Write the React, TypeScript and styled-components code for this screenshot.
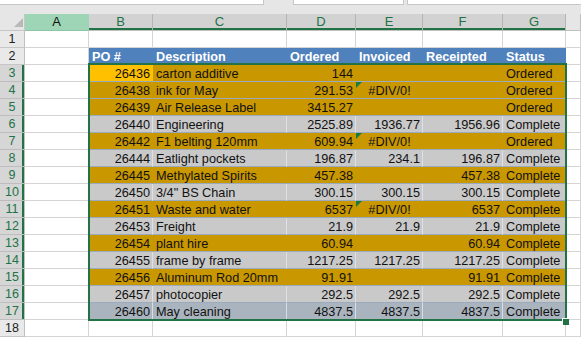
import React from "react";
import styled, { createGlobalStyle, css } from "styled-components";

const GlobalStyle = createGlobalStyle`
  html, body { margin: 0; padding: 0; background: #fff; overflow: hidden; }
`;

const GREEN = "#217346";
const ORANGE = "#c99700";
const GOLD = "#ffc000";
const GREY = "#c9c9c9";
const SLATE = "#aab4be";
const BLUE = "#4f81bd";
const ROWLINE = "#9aabbf";
const GRID = "#d4d4d4";

const Page = styled.div`
  position: relative;
  width: 581px;
  height: 338px;
  overflow: hidden;
  background: #fff;
  font-family: "Liberation Sans", Arial, sans-serif;
`;

const TopBar = styled.div`
  display: flex;
  align-items: flex-start;
  height: 14px;
  background: #e6e6e6;
`;

const BarField = styled.div<{ $w: number; $ml?: number; $bl?: boolean; $br?: boolean }>`
  box-sizing: border-box;
  flex: 0 0 ${(p) => p.$w}px;
  margin-left: ${(p) => p.$ml ?? 0}px;
  height: 5px;
  background: #fff;
  border-bottom: 1px solid #c6c6c6;
  border-left: ${(p) => (p.$bl ? "1px solid #c6c6c6" : "none")};
  border-right: ${(p) => (p.$br ? "1px solid #c6c6c6" : "none")};
`;

const Sheet = styled.div`
  display: grid;
  grid-template-columns: 25px 64px 64px 134px 69px 67px 80px 63px 1fr;
  grid-auto-rows: 17px;
`;

const Corner = styled.div`
  position: relative;
  box-sizing: border-box;
  background: #e6e6e6;
  border-right: 1px solid #c6c6c6;
  border-bottom: 1px solid #c6c6c6;
  &::after {
    content: "";
    position: absolute;
    right: 1px;
    bottom: 3px;
    width: 0;
    height: 0;
    border-left: 9px solid transparent;
    border-bottom: 9px solid #b9b9b9;
  }
`;

type HeadState = "normal" | "active" | "selected";

const ColHead = styled.div<{ $state: HeadState }>`
  box-sizing: border-box;
  display: flex;
  align-items: center;
  justify-content: center;
  font-size: 13px;
  line-height: 16px;
  border-right: 1px solid #c0c0c0;
  border-bottom: 1px solid #c0c0c0;
  background: #e6e6e6;
  color: #222;
  ${(p) =>
    p.$state === "active" &&
    css`
      background: #9fd5b7;
      color: #111;
      border-right-color: #9fd5b7;
      border-bottom-color: #8cc4a5;
    `}
  ${(p) =>
    p.$state === "selected" &&
    css`
      background: #d2d2d2;
      color: ${GREEN};
      border-right-color: #b5b5b5;
      box-shadow: inset 0 -2px 0 ${GREEN};
    `}
`;

const RowHead = styled.div<{ $selected?: boolean }>`
  box-sizing: border-box;
  text-align: center;
  font-size: 12.5px;
  line-height: 16px;
  background: #e9e9e9;
  color: #222;
  border-right: 1px solid #c0c0c0;
  border-bottom: 1px solid #c6c6c6;
  ${(p) =>
    p.$selected &&
    css`
      background: #d6d6d6;
      color: ${GREEN};
      border-bottom-color: #bdbdbd;
      box-shadow: inset -2px 0 0 ${GREEN};
    `}
`;

type Fill = "none" | "blue" | "orange" | "gold" | "grey" | "slate";

const fillStyles: Record<Fill, ReturnType<typeof css>> = {
  none: css`
    background: #fff;
    border-right-color: ${GRID};
    border-bottom-color: ${GRID};
  `,
  blue: css`
    background: ${BLUE};
    color: #fff;
    font-weight: bold;
    border-right-color: ${BLUE};
    border-bottom-color: ${BLUE};
  `,
  orange: css`
    background: ${ORANGE};
    border-right-color: ${ORANGE};
    border-bottom-color: ${ROWLINE};
  `,
  gold: css`
    background: ${GOLD};
    border-right-color: ${GOLD};
    border-bottom-color: ${ROWLINE};
  `,
  grey: css`
    background: ${GREY};
    border-right-color: #dde0e6;
    border-bottom-color: ${ROWLINE};
  `,
  slate: css`
    background: ${SLATE};
    border-right-color: #d9dde3;
    border-bottom-color: ${ROWLINE};
  `,
};

const Cell = styled.div<{ $fill: Fill; $align: "left" | "right" | "center"; $flag?: boolean }>`
  position: relative;
  box-sizing: border-box;
  overflow: hidden;
  white-space: nowrap;
  font-size: 12.7px;
  line-height: 15px;
  padding: 2px 2px 0 3px;
  color: #111;
  text-align: ${(p) => p.$align};
  border-right: 1px solid;
  border-bottom: 1px solid;
  ${(p) => fillStyles[p.$fill]}
  ${(p) =>
    p.$flag &&
    css`
      &::before {
        content: "";
        position: absolute;
        left: 0;
        top: 0;
        width: 0;
        height: 0;
        border-top: 6px solid #1d7a3e;
        border-right: 6px solid transparent;
      }
    `}
`;

const Selection = styled.div`
  position: absolute;
  left: 88px;
  top: 63px;
  width: 479px;
  height: 258px;
  box-sizing: border-box;
  border: 2px solid ${GREEN};
  pointer-events: none;
`;

const FillHandle = styled.div`
  position: absolute;
  left: 562px;
  top: 318px;
  width: 7px;
  height: 7px;
  box-sizing: border-box;
  background: ${GREEN};
  border-left: 1px solid #fff;
  border-top: 1px solid #fff;
`;

type Row = {
  po: string;
  desc: string;
  ordered: string;
  invoiced: string;
  receipted: string;
  status: string;
  fill: Fill;
  flag?: boolean;
};

const rows: Row[] = [
  { po: "26436", desc: "carton additive", ordered: "144", invoiced: "", receipted: "", status: "Ordered", fill: "orange" },
  { po: "26438", desc: "ink for May", ordered: "291.53", invoiced: "#DIV/0!", receipted: "", status: "Ordered", fill: "orange", flag: true },
  { po: "26439", desc: "Air Release Label", ordered: "3415.27", invoiced: "", receipted: "", status: "Ordered", fill: "orange" },
  { po: "26440", desc: "Engineering", ordered: "2525.89", invoiced: "1936.77", receipted: "1956.96", status: "Complete", fill: "grey" },
  { po: "26442", desc: "F1 belting 120mm", ordered: "609.94", invoiced: "#DIV/0!", receipted: "", status: "Ordered", fill: "orange", flag: true },
  { po: "26444", desc: "Eatlight pockets", ordered: "196.87", invoiced: "234.1", receipted: "196.87", status: "Complete", fill: "grey" },
  { po: "26445", desc: "Methylated Spirits", ordered: "457.38", invoiced: "", receipted: "457.38", status: "Complete", fill: "orange" },
  { po: "26450", desc: "3/4\" BS Chain", ordered: "300.15", invoiced: "300.15", receipted: "300.15", status: "Complete", fill: "grey" },
  { po: "26451", desc: "Waste and water", ordered: "6537", invoiced: "#DIV/0!", receipted: "6537", status: "Complete", fill: "orange", flag: true },
  { po: "26453", desc: "Freight", ordered: "21.9", invoiced: "21.9", receipted: "21.9", status: "Complete", fill: "grey" },
  { po: "26454", desc: "plant hire", ordered: "60.94", invoiced: "", receipted: "60.94", status: "Complete", fill: "orange" },
  { po: "26455", desc: "frame by frame", ordered: "1217.25", invoiced: "1217.25", receipted: "1217.25", status: "Complete", fill: "grey" },
  { po: "26456", desc: "Aluminum Rod 20mm", ordered: "91.91", invoiced: "", receipted: "91.91", status: "Complete", fill: "orange" },
  { po: "26457", desc: "photocopier", ordered: "292.5", invoiced: "292.5", receipted: "292.5", status: "Complete", fill: "grey" },
  { po: "26460", desc: "May cleaning", ordered: "4837.5", invoiced: "4837.5", receipted: "4837.5", status: "Complete", fill: "slate" },
];

const letters = ["A", "B", "C", "D", "E", "F", "G", "H"];

const BlankRow: React.FC<{ n: number }> = ({ n }) => (
  <>
    <RowHead>{n}</RowHead>
    {letters.map((l) => (
      <Cell key={l} $fill="none" $align="left" />
    ))}
  </>
);

export default function App() {
  return (
    <>
      <GlobalStyle />
      <Page>
        <TopBar>
          <BarField $w={264} $br />
          <BarField $w={111} $ml={29} $bl $br />
          <BarField $w={174} $ml={3} $bl />
        </TopBar>
        <Sheet>
          <Corner />
          {letters.map((l, i) => (
            <ColHead
              key={l}
              $state={i === 0 ? "active" : i === 7 ? "normal" : "selected"}
            >
              {i === 7 ? "" : l}
            </ColHead>
          ))}

          <BlankRow n={1} />

          <RowHead>2</RowHead>
          <Cell $fill="none" $align="left" />
          <Cell $fill="blue" $align="left">PO #</Cell>
          <Cell $fill="blue" $align="left">Description</Cell>
          <Cell $fill="blue" $align="left">Ordered</Cell>
          <Cell $fill="blue" $align="left">Invoiced</Cell>
          <Cell $fill="blue" $align="left">Receipted</Cell>
          <Cell $fill="blue" $align="left">Status</Cell>
          <Cell $fill="none" $align="left" />

          {rows.map((r, i) => (
            <React.Fragment key={r.po}>
              <RowHead $selected>{i + 3}</RowHead>
              <Cell $fill="none" $align="left" />
              <Cell $fill={i === 0 ? "gold" : r.fill} $align="right">{r.po}</Cell>
              <Cell $fill={r.fill} $align="left">{r.desc}</Cell>
              <Cell $fill={r.fill} $align="right">{r.ordered}</Cell>
              <Cell
                $fill={r.fill}
                $align={r.invoiced.startsWith("#") ? "center" : "right"}
                $flag={r.flag}
              >
                {r.invoiced}
              </Cell>
              <Cell $fill={r.fill} $align="right">{r.receipted}</Cell>
              <Cell $fill={r.fill} $align="left">{r.status}</Cell>
              <Cell $fill="none" $align="left" />
            </React.Fragment>
          ))}

          <BlankRow n={18} />
        </Sheet>
        <Selection />
        <FillHandle />
      </Page>
    </>
  );
}
